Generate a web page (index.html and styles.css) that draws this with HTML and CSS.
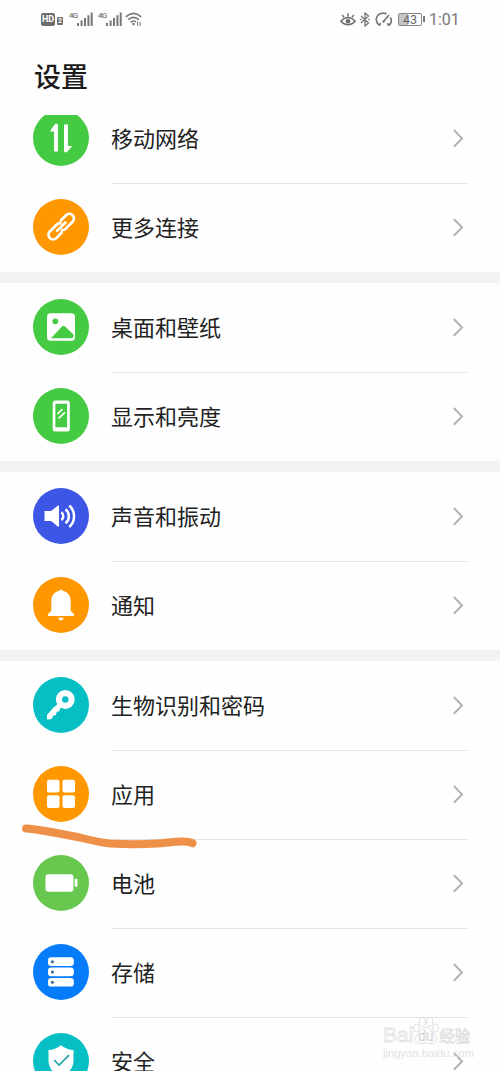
FILE: index.html
```html
<!DOCTYPE html>
<html lang="zh-CN">
<head>
<meta charset="utf-8">
<title>设置</title>
<link rel="stylesheet" href="styles.css">
</head>
<body>
<svg class="defs" aria-hidden="true">
  <symbol id="chevron" viewBox="0 0 12 20"><path d="M1.800 2 10 10.400l-8.200 8.400" fill="none" stroke="#b1b1b1" stroke-width="2"/></symbol>
  <symbol id="signal" viewBox="0 0 16 14"><path d="M1 11v3M4.600 8.500V14M8 6v8M11.400 3.200V14M14.700 .5V14" stroke="#777" stroke-width="2"/></symbol>
</svg>
<main class="screen">
  <header class="header">
    <div class="status">
      <div class="status-left">
        <span class="hd">HD</span><span class="sim">2</span>
        <span class="net">4G</span><svg class="signal"><use href="#signal"/></svg>
        <span class="net second">4G</span><svg class="signal"><use href="#signal"/></svg>
        <svg class="wifi" viewBox="0 0 17 14" fill="none" stroke="#777" stroke-width="1.600"><path d="M.8 4.800Q8.500-2 16.200 4.800M3.200 7.600Q8.500 3 13.800 7.600M5.600 10.300Q8.500 7.800 11 10"/><path d="m6.800 11.800 1.700 1.900 1.700-1.900-1.700-1z" fill="#777" stroke="none"/><path d="M12.600 9.500v4M15 10v4" stroke-width="1"/></svg>
      </div>
      <div class="status-right">
        <svg class="eye" viewBox="0 0 16 15" fill="none" stroke="#6c6c6c" stroke-width="1.400"><path d="M.8 9.200Q8 2 15.200 9.200 8 16.400 .8 9.200ZM8 4.500V1.200M4 5.300 2.300 2.800M12 5.300l1.700-2.500"/><circle cx="8" cy="9.200" r="2.300" fill="#6c6c6c" stroke="none"/></svg>
        <svg class="bluetooth" viewBox="0 0 10 15" fill="none" stroke="#777" stroke-width="1.300"><path d="m1 4 7.500 7L5 14V1l3.500 3L1 11M.2 7.500h1.500M8.300 7.500h1.500"/></svg>
        <svg class="gauge" viewBox="0 0 18 15" fill="none" stroke="#777" stroke-width="1.700"><path d="M4.200 13.200C-.5 9.500.8 3 6 1.500Q9 .6 11.500 2M15.300 5.500Q18 10 13.800 13.500M4.200 13.500l1.500-2.300M13.800 13.500l-1.500-2.300M8.500 9.500 14 3"/><circle cx="8.500" cy="9.500" r="1.200" fill="#777" stroke="none"/></svg>
        <span class="power"><span class="power-body">43</span><i class="power-tip"></i></span>
        <span class="time">1:01</span>
      </div>
    </div>
    <h1 class="title">设置</h1>
  </header>

  <div class="viewport">
    <div class="list">
      <section class="group">
        <div class="row">
          <svg class="icon green" viewBox="0 0 56 56"><path d="M25 41.500h-4V21.500h-4.200l5-7.200Q25 12 25 16zM31 14.500h4V36h4.200l-4.700 5.500q-3.500 2.500-3.500-1z" fill="#fff"/></svg>
          <div class="cell"><span class="label">移动网络</span><svg class="chevron"><use href="#chevron"/></svg></div>
        </div>
        <div class="row">
          <svg class="icon orange" viewBox="0 0 56 56" fill="none" stroke="#fff" stroke-width="2.700"><g transform="translate(28.200 27.700) rotate(-45)"><path d="M3-4.600H11.500a4.600 4.600 0 0 1 0 9.200H1.500A4.300 4.300 0 0 1-2.500 2M-3 4.600h-8.500a4.600 4.600 0 0 1 0-9.200h10A4.300 4.300 0 0 1 2.500-2M-7 0H7"/></g></svg>
          <div class="cell"><span class="label">更多连接</span><svg class="chevron"><use href="#chevron"/></svg></div>
        </div>
      </section>
      <section class="group">
        <div class="row">
          <svg class="icon green" viewBox="0 0 56 56"><rect x="14" y="14.300" width="28" height="27.400" rx="3.500" fill="#fff"/><g fill="#45ca43"><circle cx="22.300" cy="22.300" r="2.900"/><path d="M18 39.200 29 27.500q1.500-1.500 3 0l8.500 8v1.500q0 2.200-2.200 2.200z"/></g></svg>
          <div class="cell"><span class="label">桌面和壁纸</span><svg class="chevron"><use href="#chevron"/></svg></div>
        </div>
        <div class="row">
          <svg class="icon green" viewBox="0 0 56 56"><path d="M22.200 12.500h12.100q2.500 0 2.500 2.500v26q0 2.500-2.500 2.500H22.200q-2.500 0-2.500-2.500V15q0-2.500 2.500-2.500zm.2 3.300v23.400h11.700V15.800z" fill="#fff" fill-rule="evenodd"/><path d="m24.500 25.800 5-4.800M25.500 30.300l6.500-6" stroke="#fff" stroke-width="1.700"/></svg>
          <div class="cell"><span class="label">显示和亮度</span><svg class="chevron"><use href="#chevron"/></svg></div>
        </div>
      </section>
      <section class="group">
        <div class="row">
          <svg class="icon blue" viewBox="0 0 56 56"><path d="M11.500 23h6.700l6.500-5.300q1.300-.8 1.300.7v19.400q0 1.500-1.300.7L18.200 33h-6.700z" fill="#fff"/><path d="M28.300 24.300a4.700 4.700 0 0 1 0 7.700M32.500 21.200a9 9 0 0 1 0 14M36.300 17.500a14.500 14.500 0 0 1 0 21.500" fill="none" stroke="#fff" stroke-width="2.500"/></svg>
          <div class="cell"><span class="label">声音和振动</span><svg class="chevron"><use href="#chevron"/></svg></div>
        </div>
        <div class="row">
          <svg class="icon orange" viewBox="0 0 56 56"><path d="M25.700 14q2.300-3 4.600 0c5 1.300 7.400 5 7.400 10v9.700l3.300 3.600v1.700H15v-1.700l3.300-3.600v-9.700c0-5 2.400-8.700 7.400-10zM25 40.800h6q-3 5.200-6 0z" fill="#fff"/></svg>
          <div class="cell"><span class="label">通知</span><svg class="chevron"><use href="#chevron"/></svg></div>
        </div>
      </section>
      <section class="group">
        <div class="row">
          <svg class="icon teal" viewBox="0 0 56 56"><path d="m28 27-11.500 12" stroke="#fff" stroke-width="5" stroke-linecap="round"/><path d="M14 38.500v3.800q2.700.7 5-.8l1-3 3-.5.500-3.300 3-.5.500-3.500-6-1z" fill="#fff"/><circle cx="32.300" cy="22.500" r="6.300" fill="none" stroke="#fff" stroke-width="6.200"/></svg>
          <div class="cell"><span class="label">生物识别和密码</span><svg class="chevron"><use href="#chevron"/></svg></div>
        </div>
        <div class="row">
          <svg class="icon orange" viewBox="0 0 56 56" fill="#fff"><rect x="14" y="13.800" width="12.500" height="12.700" rx="2"/><rect x="29.500" y="13.800" width="12.500" height="12.700" rx="2"/><rect x="14" y="29.200" width="12.500" height="12.700" rx="2"/><rect x="29.500" y="29.200" width="12.500" height="12.700" rx="2"/></svg>
          <div class="cell"><span class="label">应用</span><svg class="chevron"><use href="#chevron"/></svg></div>
          <svg class="scribble" viewBox="0 0 180 30"><path d="M6 8.500C15 9 24 11 34 12.500L60 17.500Q77 22 90 23.500C106 24.500 122 24.500 137 23.500 152 22.500 166 19.500 172.500 23.300" fill="none" stroke="#ef9049" stroke-width="8" stroke-linecap="round" stroke-linejoin="round"/></svg>
        </div>
        <div class="row">
          <svg class="icon lime" viewBox="0 0 56 56" fill="#fff"><rect x="12.500" y="19.300" width="28" height="17.400" rx="3"/><rect x="41.700" y="23.700" width="2.800" height="8" rx="1"/></svg>
          <div class="cell"><span class="label">电池</span><svg class="chevron"><use href="#chevron"/></svg></div>
        </div>
        <div class="row">
          <svg class="icon azure" viewBox="0 0 56 56"><g fill="#fff"><rect x="15" y="13.300" width="25.800" height="8.700" rx="3.200"/><rect x="15" y="23.600" width="25.800" height="8.700" rx="3.200"/><rect x="15" y="33.900" width="25.800" height="8.700" rx="3.200"/></g><g fill="#38688c"><circle cx="19.400" cy="17.700" r="1.500"/><circle cx="19.400" cy="28" r="1.500"/><circle cx="19.400" cy="38.300" r="1.500"/></g></svg>
          <div class="cell"><span class="label">存储</span><svg class="chevron"><use href="#chevron"/></svg></div>
        </div>
        <div class="row">
          <svg class="icon teal" viewBox="0 0 56 56"><path d="M28 12.200q6 4.500 12.500 4.900v10.400c0 8-5 12.700-12.500 16.500-7.500-3.800-12.500-8.500-12.500-16.500V17.100Q22 16.700 28 12.200z" fill="#fff"/><path d="m21.200 27.200 5 4.900 9.800-10" fill="none" stroke="#2ba7ad" stroke-width="1.800"/></svg>
          <div class="cell"><span class="label">安全</span><svg class="chevron"><use href="#chevron"/></svg></div>
        </div>
      </section>
    </div>
  </div>
  <div class="watermark">
    <div class="brand"><span>Bai</span><svg class="paw" viewBox="0 0 26 28"><g fill="#fff" stroke="#dedede"><ellipse cx="3.500" cy="11" rx="2.800" ry="4"/><ellipse cx="9.300" cy="5" rx="3" ry="4.300"/><ellipse cx="16.800" cy="5" rx="3" ry="4.300"/><ellipse cx="22.500" cy="11" rx="2.800" ry="4"/><path d="M13 10.500c4 0 5 4 8 6.500 5 4.500 2 10-3 9.500q-5-.8-10 0c-5 .5-8-5-3-9.500 3-2.500 4-6.500 8-6.500z"/></g><text x="13" y="24" text-anchor="middle" class="du">du</text></svg><span class="jingyan">经验</span></div>
    <div class="site">jingyan.baidu.com</div>
  </div>
</main>
</body>
</html>
```
FILE: styles.css
```css
* { box-sizing: border-box; }
body {
  margin: 0;
  background: #fff;
  color: #222;
  font-family: "Noto Sans CJK SC", sans-serif;
}
.defs { display: none; }
.screen {
  position: relative;
  display: flex;
  flex-direction: column;
  width: 500px;
  height: 1071px;
  overflow: hidden;
  background: #fefefe;
}
.header { height: 115px; }
.status {
  display: flex;
  justify-content: space-between;
  height: 38px;
  padding: 0 41px;
  color: #777;
  font-family: Roboto, sans-serif;
}
.status-left, .status-right { display: flex; align-items: center; }
.hd {
  width: 14px;
  height: 13px;
  border-radius: 2px;
  background: #6e6e6e;
  color: #fff;
  font-size: 9px;
  font-weight: 700;
  line-height: 13px;
  text-align: center;
}
.sim {
  width: 6px;
  height: 8px;
  margin: 4px 0 0 2px;
  border-radius: 1px;
  background: #6e6e6e;
  color: #fff;
  font-size: 7px;
  font-weight: 700;
  line-height: 8px;
  text-align: center;
}
.net {
  width: 8px;
  height: 14px;
  margin-left: 6px;
  font-size: 8px;
  font-weight: 500;
  line-height: 7px;
  letter-spacing: -.8px;
}
.second { margin-left: 5px; }
.signal { width: 16px; height: 14px; }
.wifi { width: 17px; height: 14px; margin-left: 3px; }
.eye { width: 16px; height: 15px; }
.bluetooth { width: 10px; height: 15px; margin-left: 4px; }
.gauge { width: 18px; height: 15px; margin-left: 5px; }
.power { display: flex; align-items: center; margin-left: 5px; }
.power-body {
  width: 24px;
  height: 13px;
  border: 1px solid #858585;
  border-radius: 2px;
  background: linear-gradient(90deg, #c6c6c6 43%, #fff 43%);
  color: #666;
  font-size: 12.5px;
  line-height: 11px;
  text-align: center;
}
.power-tip { width: 2px; height: 6px; margin-left: 1px; background: #777; }
.time { width: 30px; margin: 2px 0 0 4px; font-size: 16px; line-height: 20px; white-space: nowrap; }
.title {
  margin: 18px 0 0 34px;
  color: #1b1b1b;
  font-size: 27px;
  font-weight: 500;
  line-height: 40px;
}
.viewport { flex: 1; overflow: hidden; }
.list { margin-top: -21px; }
.group + .group { border-top: 11px solid #f3f3f3; }
.row {
  position: relative;
  display: flex;
  align-items: center;
  height: 89px;
  padding: 0 33px;
}
.icon { flex: none; width: 56px; height: 56px; margin-bottom: 1px; border-radius: 50%; }
.green { background: #45ca43; }
.orange { background: #ff9800; }
.blue { background: #3e56e6; }
.teal { background: #05bfc5; }
.lime { background: #67c74e; }
.azure { background: #067cfb; }
.cell {
  display: flex;
  flex: 1;
  align-items: center;
  justify-content: space-between;
  height: 90px;
  margin-left: 22px;
  padding-right: 3px;
  border-bottom: 1px solid #e2e2e2;
  font-size: 22px;
  line-height: 32px;
}
.label { padding-bottom: 2px; }
.row:last-child .cell { border-bottom-color: transparent; }
.chevron { width: 12px; height: 20px; }
.scribble {
  position: absolute;
  z-index: 1;
  top: 70px;
  left: 20px;
  width: 180px;
  height: 30px;
}
.watermark {
  position: absolute;
  z-index: 2;
  top: 1016px;
  left: 383px;
  width: 92px;
}
.brand {
  display: flex;
  align-items: flex-end;
  height: 31px;
  color: #fff;
  font-family: "Liberation Sans", sans-serif;
  font-size: 21px;
  line-height: 24px;
  -webkit-text-stroke: .8px #dedede;
}
.paw { flex: none; width: 26px; height: 28px; margin-bottom: 2px; }
.du {
  fill: #fff;
  stroke: #d4d4d4;
  stroke-width: .7px;
  font-size: 14px;
}
.jingyan { font-family: "Noto Sans CJK SC", sans-serif; font-size: 15.5px; white-space: nowrap; }
.site {
  color: #e3e3e3;
  font-family: "Liberation Sans", sans-serif;
  font-size: 11.3px;
  line-height: 13px;
}
```
